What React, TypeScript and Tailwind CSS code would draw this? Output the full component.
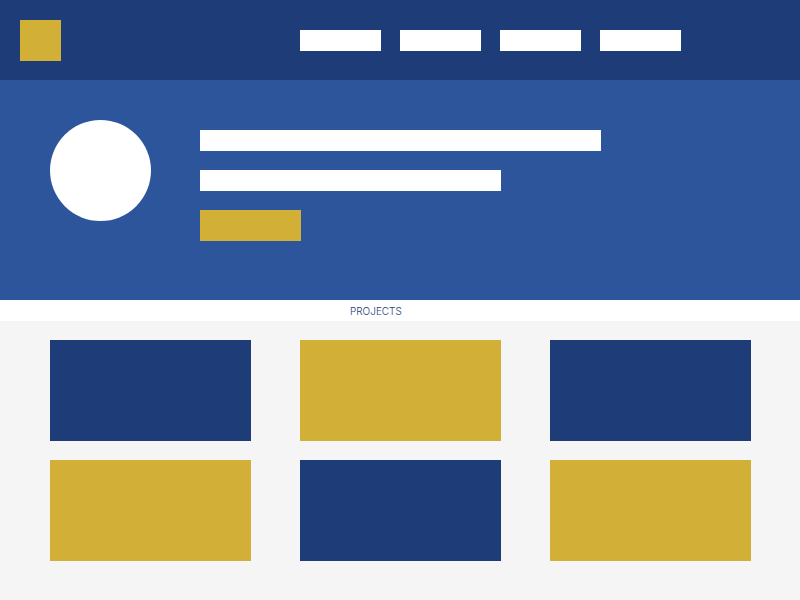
const navItems = ["Home", "About", "Projects", "Contact"];

const projects = [
  { name: "Project 1", color: "bg-[#1e3c78]" },
  { name: "Project 2", color: "bg-[#d2af37]" },
  { name: "Project 3", color: "bg-[#1e3c78]" },
  { name: "Project 4", color: "bg-[#d2af37]" },
  { name: "Project 5", color: "bg-[#1e3c78]" },
  { name: "Project 6", color: "bg-[#d2af37]" },
];

export default function App() {
  return (
    <div className="flex min-h-screen flex-col bg-[#f5f5f5] font-[Inter,sans-serif]">
      <header className="flex h-20 items-center bg-[#1e3c78] px-5">
        <a href="#home" aria-label="Home" className="size-[41px] bg-[#d2af37]" />
        <nav className="ml-[239px] flex gap-[19px]">
          {navItems.map((item) => (
            <a key={item} href="#" aria-label={item} className="h-[21px] w-[81px] bg-white" />
          ))}
        </nav>
      </header>
      <section className="flex h-[220px] items-start gap-[49px] bg-[#2d559b] px-[50px] pt-10">
        <div className="size-[101px] shrink-0 rounded-full bg-white" />
        <div className="flex grow flex-col items-start gap-[19px] pt-[10px]">
          <div className="h-[21px] w-full max-w-[401px] bg-white" />
          <div className="h-[21px] w-full max-w-[301px] bg-white" />
          <button type="button" aria-label="View projects" className="h-[31px] w-[101px] bg-[#d2af37]" />
        </div>
      </section>
      <main>
        <h2 className="bg-white pt-px pl-[350px] text-[10px] leading-5 font-light text-[#1e3c78]">PROJECTS</h2>
        <div className="grid grid-cols-3 gap-x-[49px] gap-y-[19px] pt-[19px] pr-[49px] pb-[39px] pl-[50px]">
          {projects.map((project) => (
            <article key={project.name} aria-label={project.name} className={`h-[101px] ${project.color}`} />
          ))}
        </div>
      </main>
    </div>
  );
}
